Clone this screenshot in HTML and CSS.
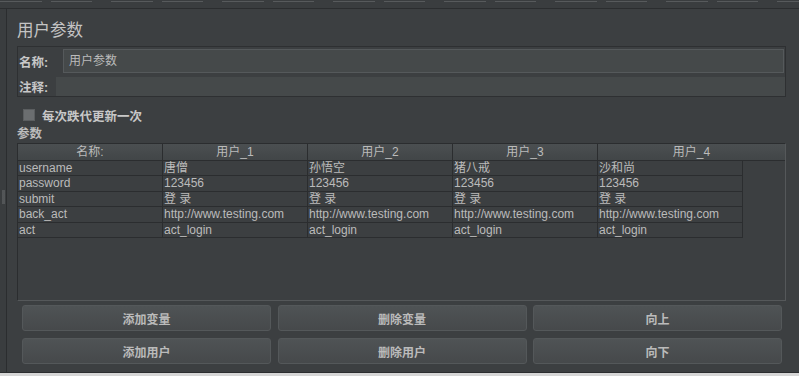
FILE: index.html
```html
<!DOCTYPE html>
<html lang="zh-CN">
<head>
    <meta charset="UTF-8">
    <meta name="viewport" content="width=device-width, initial-scale=1.0">
    <title>用户参数</title>
    <link rel="stylesheet" href="styles.css">
</head>
<body>

<div class="topbar"></div>

<div class="frame">
    <div class="splitter"><span class="grip"></span></div>

    <div class="panel">
        <h1 class="title">用户参数</h1>

        <div class="namebox">
            <div class="field-row">
                <label class="label label-name">名称:</label>
                <div class="input input-name">用户参数</div>
            </div>
            <div class="field-row">
                <label class="label label-note">注释:</label>
                <div class="input input-note"></div>
            </div>
        </div>

        <div class="check-row">
            <span class="checkbox"></span>
            <span class="check-text">每次跌代更新一次</span>
        </div>

        <div class="section-label">参数</div>

        <!-- Parameter table -->
        <div class="table-pane">
            <div class="table-head">
                <div class="th">名称:</div>
                <div class="th">用户_1</div>
                <div class="th">用户_2</div>
                <div class="th">用户_3</div>
                <div class="th th-last">用户_4</div>
            </div>
            <div class="table-body">
                <div class="td">username</div>
                <div class="td">唐僧</div>
                <div class="td">孙悟空</div>
                <div class="td">猪八戒</div>
                <div class="td">沙和尚</div>

                <div class="td">password</div>
                <div class="td">123456</div>
                <div class="td">123456</div>
                <div class="td">123456</div>
                <div class="td">123456</div>

                <div class="td">submit</div>
                <div class="td">登 录</div>
                <div class="td">登 录</div>
                <div class="td">登 录</div>
                <div class="td">登 录</div>

                <div class="td">back_act</div>
                <div class="td">http://www.testing.com</div>
                <div class="td">http://www.testing.com</div>
                <div class="td">http://www.testing.com</div>
                <div class="td">http://www.testing.com</div>

                <div class="td">act</div>
                <div class="td">act_login</div>
                <div class="td">act_login</div>
                <div class="td">act_login</div>
                <div class="td">act_login</div>
            </div>
        </div>

        <div class="buttons">
            <button class="btn">添加变量</button>
            <button class="btn">删除变量</button>
            <button class="btn">向上</button>
            <button class="btn">添加用户</button>
            <button class="btn">删除用户</button>
            <button class="btn">向下</button>
        </div>
    </div>
</div>

</body>
</html>
```

FILE: styles.css
```css
body {
    margin: 0;
    width: 799px;
    height: 376px;
    overflow: hidden;
    background-color: #d6d6d6;
    font-family: "Liberation Sans", "Noto Sans CJK SC", sans-serif;
    font-size: 12px;
    color: #bbbbbb;
}

/* Top tab strip */
.topbar {
    height: 8px;
    border-bottom: 1px solid #2b2d2f;
    background-color: #3a3d3f;
    background-image: repeating-linear-gradient(90deg,
        #575a5c 0, #575a5c 42px,
        transparent 42px, transparent 51px,
        #575a5c 51px, #575a5c 92px,
        transparent 92px, transparent 111px);
    background-size: 100% 1px;
    background-position: 0 1px;
    background-repeat: no-repeat;
}

.frame {
    display: flex;
    height: 363px;
    border-bottom: 1px solid #2b2d2f;
    background-color: #3c3f41;
}

.splitter {
    width: 7px;
    border-right: 1px solid #2b2d2f;
    background-color: #3a3d3f;
    display: flex;
    justify-content: center;
    align-items: center;
    padding-top: 12px;
    box-sizing: border-box;
}

.grip {
    width: 3px;
    height: 14px;
    background-image: radial-gradient(#606366 0.6px, transparent 0.9px);
    background-size: 2px 2px;
}

.panel {
    flex: 1;
    padding: 0 13px 0 10px;
}

.title {
    margin: 11px 0 0;
    font-size: 16.5px;
    line-height: 20px;
    font-weight: normal;
    color: #c4c4c4;
}

/* Name / comment box */
.namebox {
    margin-top: 6px;
    border: 1px solid #2e3032;
    padding: 2px 1px 0 0;
    display: flex;
    flex-direction: column;
    gap: 4px;
}

.field-row {
    display: flex;
    align-items: center;
}

.label {
    font-weight: bold;
    font-size: 12.5px;
    color: #c8c8c8;
    padding-left: 1px;
    box-sizing: border-box;
}

.label-name {
    width: 45px;
}

.label-note {
    width: 38px;
}

.input {
    flex: 1;
    box-sizing: border-box;
    background-color: #45494a;
    color: #bbbbbb;
    font-size: 12px;
}

.input-name {
    height: 24px;
    line-height: 22px;
    border: 1px solid #55595b;
    padding-left: 5px;
}

.input-note {
    height: 19px;
    margin-right: -1px;
}

.check-row {
    margin-top: 10px;
    height: 16px;
    display: flex;
    align-items: center;
    padding-left: 6px;
}

.checkbox {
    width: 12px;
    height: 12px;
    box-sizing: border-box;
    background-color: #6b6e70;
    border: 1px solid #5b5e60;
    margin-right: 7px;
}

.check-text {
    font-weight: bold;
    font-size: 12.5px;
    color: #c8c8c8;
}

.section-label {
    margin-top: 4px;
    line-height: 14px;
    font-size: 12.5px;
    font-weight: bold;
    color: #bbbbbb;
}

/* Table */
.table-pane {
    margin-top: 2px;
    height: 158px;
    box-sizing: border-box;
    border: 1px solid #2b2d2f;
    border-right-color: #55585a;
    border-bottom-color: #55585a;
}

.table-head {
    display: flex;
    height: 17px;
    background: linear-gradient(#4b4f51, #414547);
}

.th {
    width: 145px;
    box-sizing: border-box;
    border-right: 1px solid #2b2d2f;
    border-bottom: 1px solid #2b2d2f;
    text-align: center;
    line-height: 16px;
    color: #bbbbbb;
}

.th-last {
    flex: 1;
    border-right: none;
}

.table-body {
    display: grid;
    grid-template-columns: repeat(5, 145px);
    grid-auto-rows: 15.4px;
}

.td {
    box-sizing: border-box;
    border-right: 1px solid #2b2d2f;
    border-bottom: 1px solid #2b2d2f;
    padding-left: 1px;
    line-height: 14px;
    white-space: nowrap;
    overflow: hidden;
    color: #bbbbbb;
}

/* Buttons */
.buttons {
    margin: 4px 4px 0 5px;
    display: grid;
    grid-template-columns: repeat(3, 1fr);
    column-gap: 6.5px;
    row-gap: 7px;
}

.btn {
    height: 26px;
    border: 1px solid #54585a;
    border-radius: 3px;
    background: linear-gradient(#4f5355, #46494b);
    color: #bbbbbb;
    font-family: "Liberation Sans", "Noto Sans CJK SC", sans-serif;
    font-size: 12px;
    font-weight: bold;
    padding: 0;
    cursor: pointer;
}
```
